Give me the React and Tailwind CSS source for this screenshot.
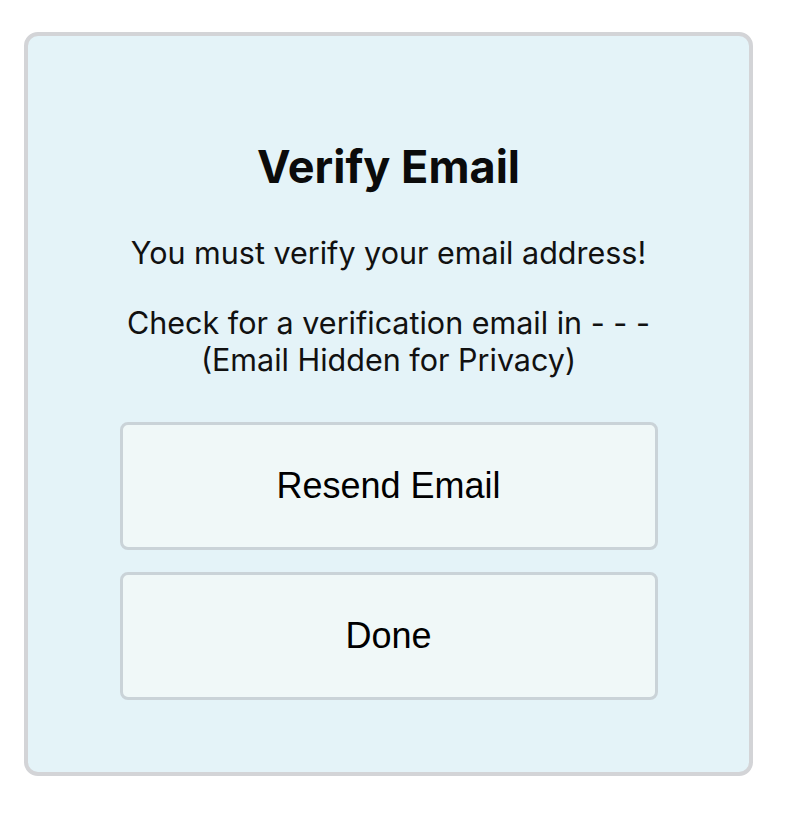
export default function App() {
  return (
    <div className="min-h-screen bg-white pt-8 pl-6" style={{ fontFamily: 'Inter, "Noto Sans", sans-serif' }}>
      <div className="w-[729px] h-[744px] rounded-[14px] border-4 border-[#d3d4d7] bg-[#e4f3f8] flex flex-col items-center pt-[106px]">
        <h1 className="text-[45px] leading-[50px] font-bold text-[#0b0b0b]">Verify Email</h1>
        <p className="mt-[42px] text-[30.5px] leading-[37px] text-[#111]">You must verify your email address!</p>
        <p className="mt-[33px] text-[30.5px] leading-[37px] text-[#111] text-center">
          Check for a verification email in - - -
          <br />
          (Email Hidden for Privacy)
        </p>
        <div className="mt-[44px] flex flex-col gap-[22px]" style={{ fontFamily: '"Liberation Sans", Arial, sans-serif' }}>
          <button className="w-[538px] h-[128px] rounded-lg border-[3px] border-[#cad3d8] bg-[#f0f8f8] text-[36px] text-black">
            Resend Email
          </button>
          <button className="w-[538px] h-[128px] rounded-lg border-[3px] border-[#cad3d8] bg-[#f0f8f8] text-[36px] text-black">
            Done
          </button>
        </div>
      </div>
    </div>
  );
}
